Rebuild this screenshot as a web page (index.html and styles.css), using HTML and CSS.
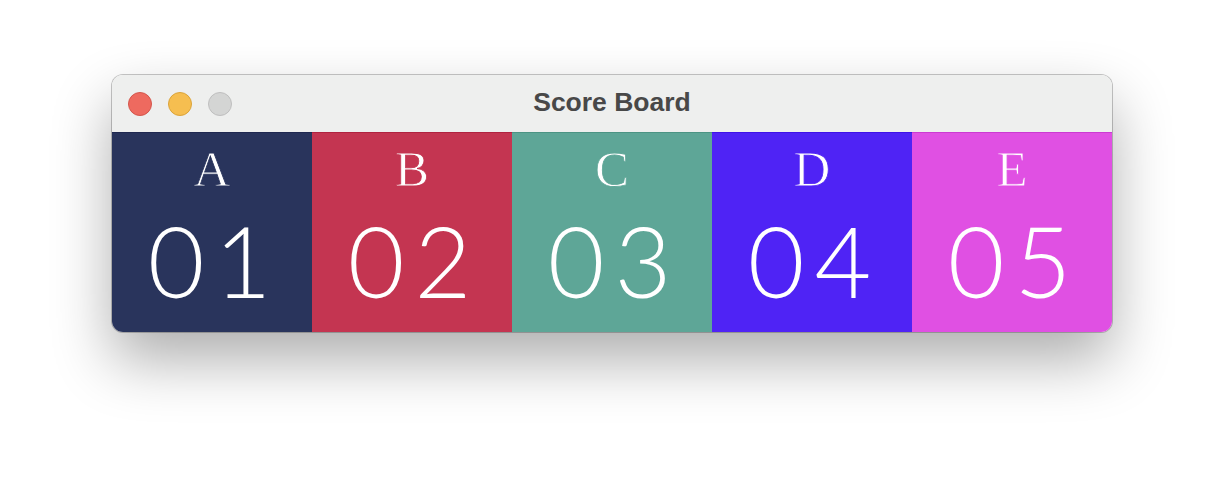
FILE: index.html
```html
<!DOCTYPE html>
<html>
<head>
<meta charset="utf-8">
<link rel="stylesheet" href="styles.css">
</head>
<body>
<div class="window">
  <div class="titlebar">
    <div class="lights">
      <span class="light red"></span>
      <span class="light yellow"></span>
      <span class="light gray"></span>
    </div>
    <div class="title">Score Board</div>
  </div>
  <div class="board">
    <div class="cell a"><div class="letter">A</div><div class="num">01</div></div>
    <div class="cell b"><div class="letter">B</div><div class="num">02</div></div>
    <div class="cell c"><div class="letter">C</div><div class="num">03</div></div>
    <div class="cell d"><div class="letter">D</div><div class="num">04</div></div>
    <div class="cell e"><div class="letter">E</div><div class="num">05</div></div>
  </div>
</div>
</body>
</html>
```
FILE: styles.css
```css
html, body {
  margin: 0;
  padding: 0;
  background: #ffffff;
  min-height: 480px;
}
body {
  padding: 75px 0 0 112px;
  box-sizing: border-box;
}
.window {
  width: 1000px;
  height: 257px;
  border-radius: 11px;
  overflow: hidden;
  box-shadow: 0 0 0 1px rgba(0,0,0,0.22), 0 28px 60px rgba(0,0,0,0.32);
  display: flex;
  flex-direction: column;
}
.titlebar {
  height: 57px;
  background: #eeefee;
  position: relative;
  display: flex;
  align-items: center;
  justify-content: center;
}
.lights {
  position: absolute;
  left: 16px;
  top: 17px;
  display: flex;
  gap: 16px;
}
.light {
  width: 22px;
  height: 22px;
  border-radius: 50%;
  border: 1px solid;
  display: block;
}
.red { background: #ee6a5f; border-color: #d4564c; }
.yellow { background: #f6be50; border-color: #dba43a; }
.gray { background: #d4d5d4; border-color: #bfbfbf; }
.title {
  font-family: "Liberation Sans", Arial, sans-serif;
  font-weight: bold;
  font-size: 26.5px;
  color: #484848;
  line-height: 30px;
  margin-top: -4px;
}
.board {
  display: flex;
  height: 200px;
}
.cell {
  width: 200px;
  height: 200px;
  display: flex;
  flex-direction: column;
  align-items: center;
  color: #ffffff;
  box-sizing: border-box;
  padding-top: 11px;
}
.letter {
  font-family: "Liberation Serif", "Times New Roman", serif;
  font-size: 51px;
  line-height: 51px;
  -webkit-text-stroke: 0.8px var(--bg);
}
.num {
  font-family: "Lato", sans-serif;
  font-weight: 300;
  font-size: 98px;
  line-height: 98px;
  letter-spacing: 10px;
  margin-top: 16px;
  margin-left: 5px;
}
.a { --bg: #29345c; background: #29345c; border-top: 1px solid #1f2850; }
.b { --bg: #c43551; background: #c43551; border-top: 1px solid #b02340; }
.c { --bg: #5ea697; background: #5ea697; border-top: 1px solid #4c9484; }
.d { --bg: #4f23f5; background: #4f23f5; border-top: 1px solid #3f12e8; }
.e { --bg: #e050e3; background: #e050e3; border-top: 1px solid #cc3ad2; }
```
